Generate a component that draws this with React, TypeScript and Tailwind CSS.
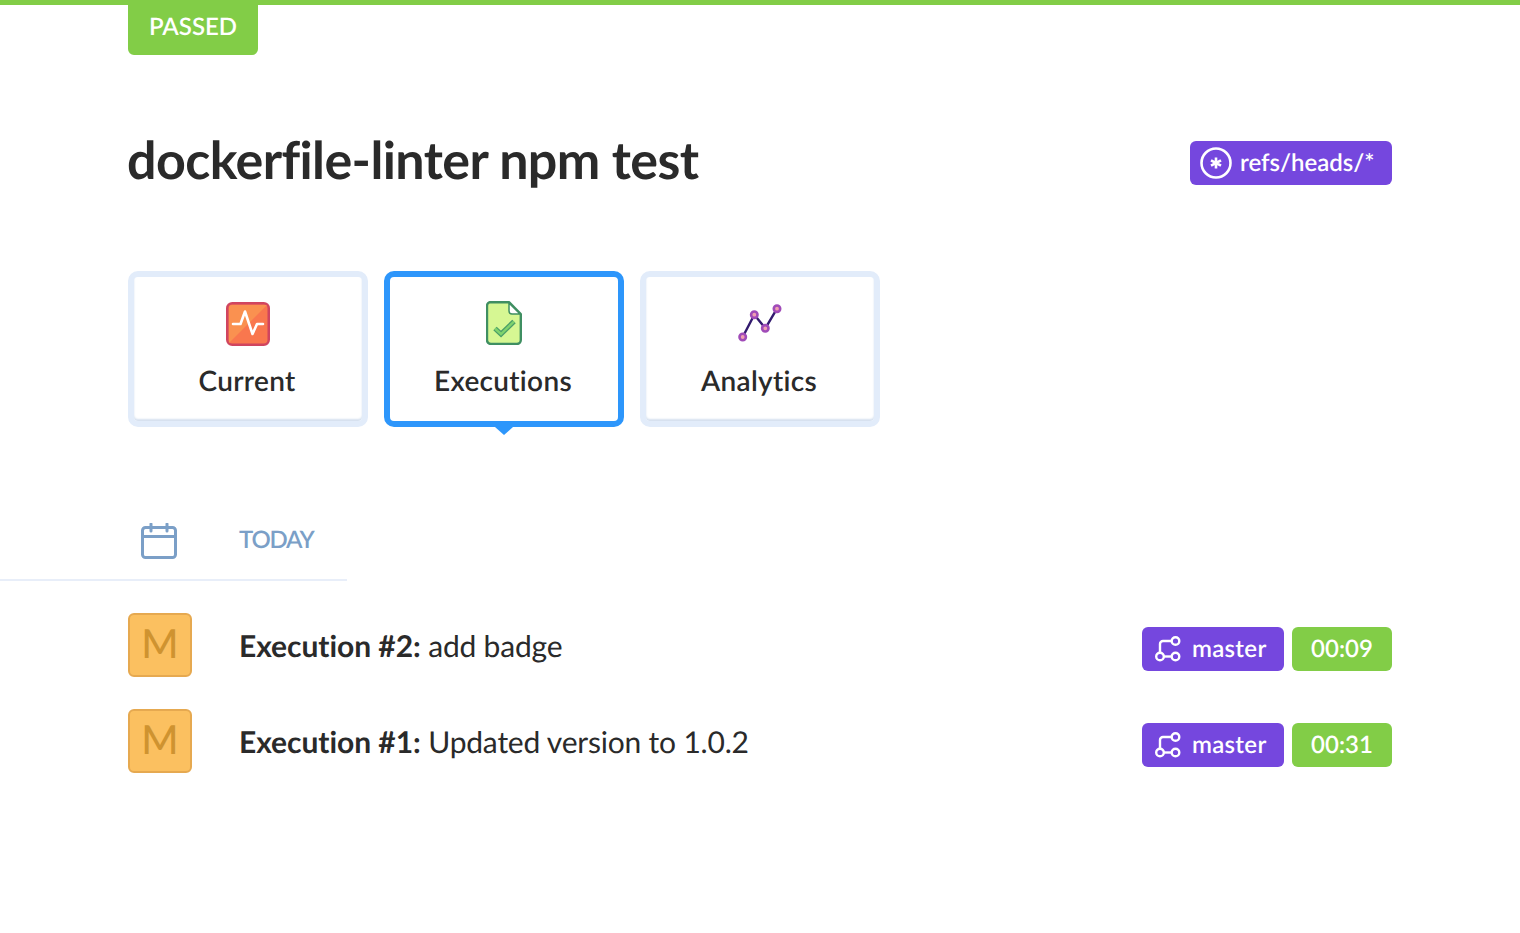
const LATO = "font-['Lato',sans-serif]";

const EXECUTIONS = [
  { id: 2, message: "add badge", time: "00:09" },
  { id: 1, message: "Updated version to 1.0.2", time: "00:31" },
];

function CurrentIcon() {
  return (
    <svg width="44" height="44" viewBox="0 0 44 44" fill="none">
      <rect x="1.25" y="1.25" width="41.5" height="41.5" rx="5" fill="#f9774e" stroke="#d0455f" strokeWidth="2.5" />
      <path d="M3 41 L41 3 H6 a3 3 0 0 0 -3 3 Z" fill="#fa9150" />
      <path d="M7 22 H14.5 L19 9.5 L26.5 32 L31 22 H37" stroke="#fff" strokeWidth="2.6" strokeLinejoin="round" strokeLinecap="round" />
    </svg>
  );
}

function ExecutionsIcon() {
  return (
    <svg className="-mt-[2px]" width="36" height="44" viewBox="0 0 36 44" fill="none">
      <path d="M5 1.2 H23 L34.8 13 V39 a4 4 0 0 1 -4 4 H5 a4 4 0 0 1 -4 -4 V5 a4 4 0 0 1 4 -4 Z" fill="#d6f793" stroke="#3f8f62" strokeWidth="2.4" strokeLinejoin="round" />
      <path d="M23 2 L34 13 H26 a3 3 0 0 1 -3 -3 Z" fill="#fff" stroke="#3f8f62" strokeWidth="1.5" strokeLinejoin="round" />
      <path d="M9 27.5 L15 33 L28 20.5" stroke="#4a9e68" strokeWidth="5" strokeLinejoin="miter" />
      <path d="M9 27.5 L15 33 L28 20.5" stroke="#7fd36d" strokeWidth="2.4" strokeLinejoin="miter" />
    </svg>
  );
}

function AnalyticsIcon() {
  const points = [
    [5.7, 33],
    [17.3, 10.7],
    [28.3, 24.3],
    [40, 4.7],
  ];
  return (
    <svg width="46" height="40" viewBox="0 0 46 40" fill="none">
      <polyline points={points.map((p) => p.join(",")).join(" ")} stroke="#321a6e" strokeWidth="2.4" strokeLinejoin="round" />
      {points.map(([cx, cy]) => (
        <circle key={cx} cx={cx} cy={cy} r="3.2" fill="#f0a0b0" stroke="#a04bb8" strokeWidth="2.6" />
      ))}
    </svg>
  );
}

function CalendarIcon() {
  return (
    <svg className="mt-[1px]" width="36" height="36" viewBox="0 0 36 36" fill="none" stroke="#7b9fc7" strokeWidth="3">
      <rect x="1.5" y="4.5" width="33" height="30" rx="3" />
      <path d="M1.5 13.5 H34.5" />
      <path d="M10 1 V8 M26 1 V8" strokeLinecap="round" />
    </svg>
  );
}

function BranchIcon() {
  return (
    <svg width="26" height="26" viewBox="0 0 26 26" fill="none" stroke="#fff" strokeWidth="2.4">
      <circle cx="20.5" cy="5" r="3.8" />
      <circle cx="5" cy="20.5" r="3.8" />
      <circle cx="20.5" cy="20.5" r="3.8" />
      <path d="M8.8 20.5 H16.7" />
      <path d="M16.7 5 H8 a3 3 0 0 0 -3 3 V16.7" />
    </svg>
  );
}

function StarIcon() {
  return (
    <svg width="32" height="32" viewBox="0 0 32 32" fill="none" stroke="#fff">
      <circle cx="16" cy="16" r="14.5" strokeWidth="2.6" />
      <path d="M16 10.5 V21.5 M11 13.3 L21 18.7 M21 13.3 L11 18.7" strokeWidth="2.6" />
    </svg>
  );
}

function Tab({ label, active, icon }: { label: string; active?: boolean; icon: React.ReactNode }) {
  return (
    <div
      className={
        active
          ? "relative w-[240px] h-[156px] rounded-[10px] border-[6px] border-[#2d96fb] bg-white"
          : "relative w-[240px] h-[156px] rounded-[10px] border-[6px] border-[#e2ecfa] bg-white shadow-[inset_0_-2px_2px_#d5e0ef]"
      }
    >
      <div className="h-[50px] mt-[22px] flex items-center justify-center">{icon}</div>
      <div className="mt-[11px] pr-[2px] text-center text-[28px] leading-[40px] font-semibold tracking-[0.3px] text-[#2a2a2a]">{label}</div>
      {active && (
        <div className="absolute left-1/2 -translate-x-1/2 -bottom-[14px] w-0 h-0 border-x-[9px] border-x-transparent border-t-[8px] border-t-[#2d96fb]" />
      )}
    </div>
  );
}

export default function App() {
  return (
    <div className={`${LATO} w-full h-[933px] bg-white overflow-hidden [text-rendering:geometricPrecision]`}>
      <div className="h-[5px] bg-[#82cd47]" />

      <div className="px-[128px]">
        <div className="w-[130px] h-[50px] pb-[6px] rounded-b-[6px] bg-[#82cd47] flex items-center justify-center text-white text-[24px] font-semibold">
          PASSED
        </div>

        <div className="mt-[86px] h-[44px] flex items-center justify-between">
          <h1 className="-mt-[6px] -ml-[1px] text-[52px] leading-[44px] font-bold tracking-[-0.6px] text-[#2a2a2a]">
            dockerfile-linter npm test
          </h1>
          <div className="h-[44px] w-[202px] rounded-[6px] bg-[#7547de] flex items-center gap-[8px] pl-[10px] text-white text-[24px] font-semibold">
            <StarIcon />
            refs/heads/*
          </div>
        </div>
      </div>

      <div className="mt-[86px] px-[128px] flex gap-[16px]">
        <Tab label="Current" icon={<CurrentIcon />} />
        <Tab label="Executions" active icon={<ExecutionsIcon />} />
        <Tab label="Analytics" icon={<AnalyticsIcon />} />
      </div>

      <div className="mt-[96px] w-[347px] h-[58px] pb-[22px] border-b-2 border-[#e8eef9] pl-[141px] flex items-center">
        <CalendarIcon />
        <span className="ml-[62px] text-[24px] font-semibold text-[#7b9fc7] tracking-[-1.2px]">TODAY</span>
      </div>

      <div className="mt-[32px] px-[128px] flex flex-col gap-[32px]">
        {EXECUTIONS.map((e) => (
          <div key={e.id} className="h-[64px] flex items-center">
            <div className="w-[64px] h-[64px] pb-[4px] rounded-[6px] bg-[#fbc060] border-2 border-[#e6a950] flex items-center justify-center text-[40px] font-medium text-[#cf9330]">
              M
            </div>
            <div className="ml-[47px] mt-[2px] text-[30px] text-[#2a2a2a] tracking-[-0.2px]">
              <span className="font-bold tracking-[-0.05px]">Execution #{e.id}:</span> {e.message}
            </div>
            <div className="ml-auto mt-[8px] flex gap-[8px]">
              <div className="w-[142px] h-[44px] rounded-[6px] bg-[#7547de] flex items-center gap-[11px] pl-[13px] text-white text-[24px] font-semibold tracking-[0.3px]">
                <BranchIcon />
                master
              </div>
              <div className="w-[100px] h-[44px] rounded-[6px] bg-[#82cd47] flex items-center justify-center text-white text-[24px] font-semibold">
                {e.time}
              </div>
            </div>
          </div>
        ))}
      </div>
    </div>
  );
}
